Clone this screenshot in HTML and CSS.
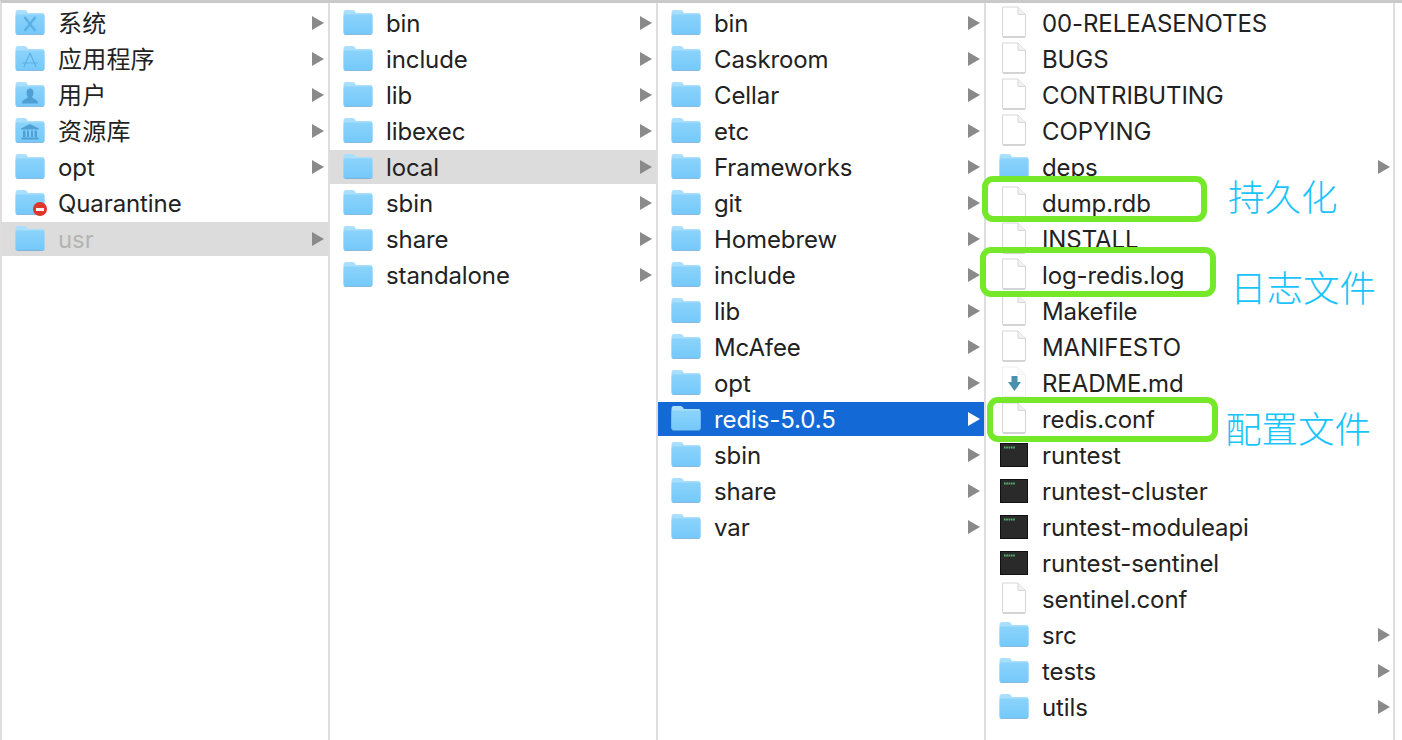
FILE: index.html
```html
<!DOCTYPE html>
<html lang="zh">
<head>
<meta charset="utf-8">
<title>Finder</title>
<link rel="stylesheet" href="styles.css">
</head>
<body>
<svg class="defs" width="0" height="0" aria-hidden="true">
  <defs>
    <linearGradient id="fg" x1="0" y1="0" x2="0" y2="1">
      <stop offset="0" stop-color="#8bd3fb"/>
      <stop offset="1" stop-color="#75c9fa"/>
    </linearGradient>
    <symbol id="folder" viewBox="0 0 30 26">
      <path d="M0.5 3.5Q0.5 1 2.5 1H9.5Q11 1 12 2.5L13 4H27.5Q29.5 4 29.5 6V23Q29.5 25 27.5 25H2.5Q0.5 25 0.5 23Z" fill="#a9defc"/>
      <path d="M0.5 7Q0.5 5.500 2 5.500H28Q29.500 5.500 29.500 7V23Q29.500 25 27.500 25H2.500Q0.500 25 0.500 23Z" fill="url(#fg)"/>
      <path d="M0.500 23.300Q0.500 25 2.500 25H27.500Q29.500 25 29.500 23.300V24Q29.500 25.800 27.500 25.800H2.500Q0.500 25.800 0.500 24Z" fill="#5ba7d6"/>
    </symbol>
    <symbol id="doc" viewBox="0 0 24 32">
      <path d="M0.500 1H16L23.500 8.500V30.500Q23.500 31 23 31H1Q0.500 31 0.500 30.500Z" fill="#fff" stroke="#d6d6d6"/>
      <path d="M16 1V8.500H23.500" fill="#f1f1f1" stroke="#d6d6d6"/>
      <path d="M1 31H23" stroke="#bdbdbd"/>
    </symbol>
    <symbol id="term" viewBox="0 0 28 24">
      <rect x="0.500" y="0.500" width="27" height="23" fill="#2a2a2a" stroke="#111"/>
      <path d="M4 4.500H15" stroke="#4fb86e" stroke-width="2" stroke-dasharray="1.600 0.700"/>
    </symbol>
    <symbol id="arrow" viewBox="0 0 12 14">
      <path d="M0 0L12 7L0 14Z"/>
    </symbol>
  </defs>
</svg>

<main class="browser">
  <section class="column">
    <div class="row cjk"><span class="icon"><svg class="folder"><use href="#folder"/></svg><svg class="glyph" viewBox="0 0 30 26"><path d="M9.500 8L20.500 22M20.500 8L9.500 22" stroke-width="2.600"/></svg></span><span class="name">系统</span><svg class="arrow"><use href="#arrow"/></svg></div>
    <div class="row cjk"><span class="icon"><svg class="folder"><use href="#folder"/></svg><svg class="glyph" viewBox="0 0 30 26"><path d="M15 8L9 22M15 8L21 22M7 18H23" stroke-width="1.200"/></svg></span><span class="name">应用程序</span><svg class="arrow"><use href="#arrow"/></svg></div>
    <div class="row cjk"><span class="icon"><svg class="folder"><use href="#folder"/></svg><svg class="glyph" viewBox="0 0 30 26"><path class="solid" d="M15 7.500C17.500 7.500 18.500 9.500 18.500 11.500C18.500 13.500 17.500 15 17 16C18 18 22 18 23 21.500V22.500H7V21.500C8 18 12 18 13 16C12.500 15 11.500 13.500 11.500 11.500C11.500 9.500 12.500 7.500 15 7.500Z"/></svg></span><span class="name">用户</span><svg class="arrow"><use href="#arrow"/></svg></div>
    <div class="row cjk"><span class="icon"><svg class="folder"><use href="#folder"/></svg><svg class="glyph" viewBox="0 0 30 26"><path class="solid" d="M15 7L24 11.500V12.500H6V11.500ZM8 13.500H10.500V20H8ZM12 13.500H14V20H12ZM16 13.500H18V20H16ZM19.500 13.500H22V20H19.500ZM6.500 20.500H23.500V22.500H6.500Z"/></svg></span><span class="name">资源库</span><svg class="arrow"><use href="#arrow"/></svg></div>
    <div class="row"><span class="icon"><svg class="folder"><use href="#folder"/></svg></span><span class="name">opt</span><svg class="arrow"><use href="#arrow"/></svg></div>
    <div class="row"><span class="icon"><svg class="folder"><use href="#folder"/></svg><span class="badge"></span></span><span class="name">Quarantine</span></div>
    <div class="row inactive dimmed"><span class="icon"><svg class="folder"><use href="#folder"/></svg></span><span class="name">usr</span><svg class="arrow"><use href="#arrow"/></svg></div>
  </section>

  <section class="column">
    <div class="row"><span class="icon"><svg class="folder"><use href="#folder"/></svg></span><span class="name">bin</span><svg class="arrow"><use href="#arrow"/></svg></div>
    <div class="row"><span class="icon"><svg class="folder"><use href="#folder"/></svg></span><span class="name">include</span><svg class="arrow"><use href="#arrow"/></svg></div>
    <div class="row"><span class="icon"><svg class="folder"><use href="#folder"/></svg></span><span class="name">lib</span><svg class="arrow"><use href="#arrow"/></svg></div>
    <div class="row"><span class="icon"><svg class="folder"><use href="#folder"/></svg></span><span class="name">libexec</span><svg class="arrow"><use href="#arrow"/></svg></div>
    <div class="row inactive"><span class="icon"><svg class="folder"><use href="#folder"/></svg></span><span class="name">local</span><svg class="arrow"><use href="#arrow"/></svg></div>
    <div class="row"><span class="icon"><svg class="folder"><use href="#folder"/></svg></span><span class="name">sbin</span><svg class="arrow"><use href="#arrow"/></svg></div>
    <div class="row"><span class="icon"><svg class="folder"><use href="#folder"/></svg></span><span class="name">share</span><svg class="arrow"><use href="#arrow"/></svg></div>
    <div class="row"><span class="icon"><svg class="folder"><use href="#folder"/></svg></span><span class="name">standalone</span><svg class="arrow"><use href="#arrow"/></svg></div>
  </section>

  <section class="column">
    <div class="row"><span class="icon"><svg class="folder"><use href="#folder"/></svg></span><span class="name">bin</span><svg class="arrow"><use href="#arrow"/></svg></div>
    <div class="row"><span class="icon"><svg class="folder"><use href="#folder"/></svg></span><span class="name">Caskroom</span><svg class="arrow"><use href="#arrow"/></svg></div>
    <div class="row"><span class="icon"><svg class="folder"><use href="#folder"/></svg></span><span class="name">Cellar</span><svg class="arrow"><use href="#arrow"/></svg></div>
    <div class="row"><span class="icon"><svg class="folder"><use href="#folder"/></svg></span><span class="name">etc</span><svg class="arrow"><use href="#arrow"/></svg></div>
    <div class="row"><span class="icon"><svg class="folder"><use href="#folder"/></svg></span><span class="name">Frameworks</span><svg class="arrow"><use href="#arrow"/></svg></div>
    <div class="row"><span class="icon"><svg class="folder"><use href="#folder"/></svg></span><span class="name">git</span><svg class="arrow"><use href="#arrow"/></svg></div>
    <div class="row"><span class="icon"><svg class="folder"><use href="#folder"/></svg></span><span class="name">Homebrew</span><svg class="arrow"><use href="#arrow"/></svg></div>
    <div class="row"><span class="icon"><svg class="folder"><use href="#folder"/></svg></span><span class="name">include</span><svg class="arrow"><use href="#arrow"/></svg></div>
    <div class="row"><span class="icon"><svg class="folder"><use href="#folder"/></svg></span><span class="name">lib</span><svg class="arrow"><use href="#arrow"/></svg></div>
    <div class="row"><span class="icon"><svg class="folder"><use href="#folder"/></svg></span><span class="name">McAfee</span><svg class="arrow"><use href="#arrow"/></svg></div>
    <div class="row"><span class="icon"><svg class="folder"><use href="#folder"/></svg></span><span class="name">opt</span><svg class="arrow"><use href="#arrow"/></svg></div>
    <div class="row active"><span class="icon"><svg class="folder"><use href="#folder"/></svg></span><span class="name">redis-5.0.5</span><svg class="arrow"><use href="#arrow"/></svg></div>
    <div class="row"><span class="icon"><svg class="folder"><use href="#folder"/></svg></span><span class="name">sbin</span><svg class="arrow"><use href="#arrow"/></svg></div>
    <div class="row"><span class="icon"><svg class="folder"><use href="#folder"/></svg></span><span class="name">share</span><svg class="arrow"><use href="#arrow"/></svg></div>
    <div class="row"><span class="icon"><svg class="folder"><use href="#folder"/></svg></span><span class="name">var</span><svg class="arrow"><use href="#arrow"/></svg></div>
  </section>

  <section class="column last">
    <div class="row"><span class="icon"><svg class="doc"><use href="#doc"/></svg></span><span class="name">00-RELEASENOTES</span></div>
    <div class="row"><span class="icon"><svg class="doc"><use href="#doc"/></svg></span><span class="name">BUGS</span></div>
    <div class="row"><span class="icon"><svg class="doc"><use href="#doc"/></svg></span><span class="name">CONTRIBUTING</span></div>
    <div class="row"><span class="icon"><svg class="doc"><use href="#doc"/></svg></span><span class="name">COPYING</span></div>
    <div class="row"><span class="icon"><svg class="folder"><use href="#folder"/></svg></span><span class="name">deps</span><svg class="arrow"><use href="#arrow"/></svg></div>
    <div class="row"><span class="icon"><svg class="doc"><use href="#doc"/></svg></span><span class="name">dump.rdb</span></div>
    <div class="row"><span class="icon"><svg class="doc"><use href="#doc"/></svg></span><span class="name">INSTALL</span></div>
    <div class="row"><span class="icon"><svg class="doc"><use href="#doc"/></svg></span><span class="name">log-redis.log</span></div>
    <div class="row"><span class="icon"><svg class="doc"><use href="#doc"/></svg></span><span class="name">Makefile</span></div>
    <div class="row"><span class="icon"><svg class="doc"><use href="#doc"/></svg></span><span class="name">MANIFESTO</span></div>
    <div class="row"><span class="icon"><svg class="doc faded"><use href="#doc"/></svg><svg class="down" viewBox="0 0 13 15"><path d="M3.500 0H9.500V6H13L6.500 15L0 6H3.500Z"/></svg></span><span class="name">README.md</span></div>
    <div class="row"><span class="icon"><svg class="doc"><use href="#doc"/></svg></span><span class="name">redis.conf</span></div>
    <div class="row"><span class="icon"><svg class="term"><use href="#term"/></svg></span><span class="name">runtest</span></div>
    <div class="row"><span class="icon"><svg class="term"><use href="#term"/></svg></span><span class="name">runtest-cluster</span></div>
    <div class="row"><span class="icon"><svg class="term"><use href="#term"/></svg></span><span class="name">runtest-moduleapi</span></div>
    <div class="row"><span class="icon"><svg class="term"><use href="#term"/></svg></span><span class="name">runtest-sentinel</span></div>
    <div class="row"><span class="icon"><svg class="doc"><use href="#doc"/></svg></span><span class="name">sentinel.conf</span></div>
    <div class="row"><span class="icon"><svg class="folder"><use href="#folder"/></svg></span><span class="name">src</span><svg class="arrow"><use href="#arrow"/></svg></div>
    <div class="row"><span class="icon"><svg class="folder"><use href="#folder"/></svg></span><span class="name">tests</span><svg class="arrow"><use href="#arrow"/></svg></div>
    <div class="row"><span class="icon"><svg class="folder"><use href="#folder"/></svg></span><span class="name">utils</span><svg class="arrow"><use href="#arrow"/></svg></div>
  </section>
  <div class="margin"></div>
</main>

<div class="mark mark-dump"></div>
<div class="mark mark-log"></div>
<div class="mark mark-conf"></div>
<div class="note note-dump">持久化</div>
<div class="note note-log">日志文件</div>
<div class="note note-conf">配置文件</div>
</body>
</html>
```

FILE: styles.css
```css
* { box-sizing: border-box; }

html, body {
  margin: 0;
  height: 100%;
  overflow: hidden;
  background: #fff;
}

body {
  position: relative;
  font-family: Inter, "Noto Sans CJK SC", sans-serif;
  color: #222;
}

.defs { position: absolute; }

.browser {
  display: flex;
  height: 740px;
  border-top: 3px solid #c9c9c9;
  border-left: 2px solid #dedee0;
}

.column {
  flex: 0 0 328px;
  padding-top: 3px;
  display: flex;
  flex-direction: column;
  gap: 2px;
  border-right: 2px solid #dedee0;
}

.column.last {
  flex-basis: 409px;
}

.column.last .row { padding-right: 3px; }

.margin { flex: 1; }

.row {
  flex: 0 0 34px;
  min-height: 0;
  display: flex;
  align-items: center;
  padding: 0 4px 0 13px;
  font-size: 24px;
  line-height: 34px;
  letter-spacing: -0.1px;
  white-space: nowrap;
}

.row.cjk { letter-spacing: 0.2px; }

.row.inactive { background: #dcdcdc; }
.row.dimmed .name { color: #b4b4b4; }
.row.active { background: #1369d6; color: #fff; }
.row.active .arrow { fill: #fff; }

.icon {
  position: relative;
  flex: 0 0 43px;
  height: 34px;
  display: flex;
  align-items: center;
}

.name { flex: 1; padding-top: 2px; }

.folder { width: 30px; height: 26px; margin-top: -2px; }

.doc { width: 24px; height: 32px; margin: -3px 0 0 3px; }

.doc.faded { opacity: 0.35; }

.term { width: 28px; height: 24px; margin-left: 1px; }

.arrow { width: 12px; height: 14px; margin-top: -1px; fill: #8a8a8a; }

.glyph {
  position: absolute;
  left: 0;
  top: 3px;
  width: 30px;
  height: 26px;
  fill: none;
  stroke: #5cb0e6;
}

.glyph .solid { fill: #4f9fd4; stroke: none; }

.down {
  position: absolute;
  left: 9px;
  top: 10px;
  width: 13px;
  height: 15px;
  fill: #4b8fb0;
}

.badge {
  position: absolute;
  left: 18px;
  top: 16px;
  width: 14px;
  height: 14px;
  border-radius: 50%;
  background: #e0352b;
}

.badge::after {
  content: "";
  position: absolute;
  left: 3px;
  top: 5.500px;
  width: 8px;
  height: 3px;
  background: #fff;
}

.mark {
  position: absolute;
  border: 6px solid #76e82a;
  border-radius: 11px;
}

.mark-dump { left: 982px; top: 176px; width: 225px; height: 46px; }
.mark-log { left: 980px; top: 247px; width: 236px; height: 50px; }
.mark-conf { left: 987px; top: 397px; width: 231px; height: 45px; }

.note {
  position: absolute;
  font-family: "Noto Sans CJK SC", sans-serif;
  font-size: 36.500px;
  font-weight: 300;
  line-height: 40px;
  color: #18c4fb;
  white-space: nowrap;
}

.note-dump { left: 1228px; top: 176px; }
.note-log { left: 1230px; top: 267px; }
.note-conf { left: 1225px; top: 408px; }
```
